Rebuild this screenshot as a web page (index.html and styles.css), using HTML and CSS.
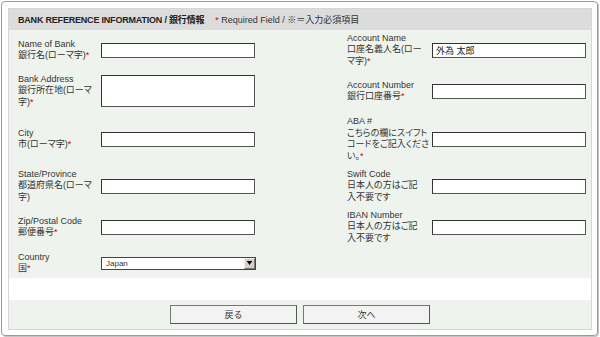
FILE: index.html
```html
<!DOCTYPE html>
<html lang="ja">
<head>
    <meta charset="UTF-8">
    <meta name="viewport" content="width=device-width, initial-scale=1.0">
    <title>Bank Reference Information</title>
    <link rel="stylesheet" href="styles.css">
</head>
<body>
    <div class="frame">
        <div class="panel">
            <div class="panel-head">
                <span class="head-title">BANK REFERENCE INFORMATION / 銀行情報</span>
                <span class="head-note"><span class="req">*</span> Required Field / ※＝入力必須項目</span>
            </div>

            <div class="form-grid">
                <!-- row 1 -->
                <label class="field-label">Name of Bank<br>銀行名(ローマ字)<span class="req">*</span></label>
                <div class="field"><input class="text-input" type="text"></div>
                <label class="field-label">Account Name<br>口座名義人名(ロー<br>マ字)<span class="req">*</span></label>
                <div class="field"><input class="text-input" type="text" value="外為 太郎"></div>

                <!-- row 2 -->
                <label class="field-label">Bank Address<br>銀行所在地(ローマ<br>字)<span class="req">*</span></label>
                <div class="field"><textarea class="text-area"></textarea></div>
                <label class="field-label">Account Number<br>銀行口座番号<span class="req">*</span></label>
                <div class="field"><input class="text-input" type="text"></div>

                <!-- row 3 -->
                <label class="field-label">City<br>市(ローマ字)<span class="req">*</span></label>
                <div class="field"><input class="text-input" type="text"></div>
                <label class="field-label">ABA #<br>こちらの欄にスイフト<br>コードをご記入くださ<br>い。<span class="req">*</span></label>
                <div class="field"><input class="text-input" type="text"></div>

                <!-- row 4 -->
                <label class="field-label">State/Province<br>都道府県名(ローマ<br>字)</label>
                <div class="field"><input class="text-input" type="text"></div>
                <label class="field-label">Swift Code<br>日本人の方はご記<br>入不要です</label>
                <div class="field"><input class="text-input" type="text"></div>

                <!-- row 5 -->
                <label class="field-label">Zip/Postal Code<br>郵便番号<span class="req">*</span></label>
                <div class="field"><input class="text-input" type="text"></div>
                <label class="field-label">IBAN Number<br>日本人の方はご記<br>入不要です</label>
                <div class="field"><input class="text-input" type="text"></div>

                <!-- row 6 -->
                <label class="field-label">Country<br>国<span class="req">*</span></label>
                <div class="field">
                    <div class="select-box">
                        <span class="select-value">Japan</span>
                        <span class="select-btn">
                            <svg width="5" height="4" viewBox="0 0 5 4"><path d="M0 0h5v1H0zM0.5 1h4L2.5 4z" fill="#000"/></svg>
                        </span>
                    </div>
                </div>
            </div>

            <div class="panel-gap"></div>

            <div class="panel-actions">
                <button class="btn">戻る</button>
                <button class="btn">次へ</button>
            </div>
        </div>
    </div>
</body>
</html>
```

FILE: styles.css
```css
* {
    margin: 0;
    padding: 0;
    box-sizing: border-box;
}

body {
    font-family: "Liberation Sans", "Noto Sans CJK JP", sans-serif;
    font-size: 9px;
    color: #333;
    background: #fff;
    font-feature-settings: "palt";
}

.frame {
    margin: 1px;
    width: 597px;
    height: 335px;
    border: 1px solid #9a9a9a;
    border-radius: 4px;
    box-shadow: 1px 1px 0 #c4c4c4;
    padding: 6px 5px 5px 6px;
}

.panel {
    border: 1px solid #d6d6d6;
    height: 100%;
    display: flex;
    flex-direction: column;
}

.panel-head {
    height: 21px;
    background: #dcdcdc;
    display: flex;
    align-items: center;
    padding-left: 9px;
}

.head-title {
    font-weight: bold;
    color: #222;
    letter-spacing: -0.2px;
}

.head-note {
    margin-left: 11px;
}

.req {
    color: #cc0000;
}

.form-grid {
    height: 248px;
    background: #eff3ee;
    padding-left: 9px;
    display: grid;
    grid-template-columns: 83px 246px 85px 154px;
    grid-template-rows: 40px 42px 54px 40px 42px 30px;
    align-items: center;
}

.field-label {
    line-height: 11.5px;
    white-space: nowrap;
}

.field {
    display: flex;
    align-items: center;
}

.text-input,
.text-area {
    width: 154px;
    height: 15px;
    border: 1px solid #555;
    border-top-color: #333;
    border-left-color: #333;
    background: #fff;
    font-family: inherit;
    font-size: 9px;
    color: #222;
    padding: 0 3px;
    outline: none;
}

.text-area {
    height: 32px;
    resize: none;
}

.select-box {
    width: 155px;
    height: 13px;
    border: 1px solid #444;
    background: #fff;
    display: flex;
    align-items: center;
    justify-content: space-between;
    font-size: 8px;
}

.select-value {
    padding-left: 4px;
}

.select-btn {
    width: 11px;
    height: 11px;
    background: #d4d0c8;
    border: 1px solid #f4f4f4;
    border-right-color: #777;
    border-bottom-color: #777;
    display: flex;
    align-items: center;
    justify-content: center;
}

.panel-gap {
    height: 22px;
    background: #fff;
}

.panel-actions {
    flex: 1;
    background: #eff3ee;
    display: flex;
    justify-content: center;
    align-items: flex-start;
    gap: 6px;
    padding-top: 5px;
}

.btn {
    width: 127px;
    height: 19px;
    border: 1px solid #555;
    border-top-color: #777;
    border-left-color: #777;
    background: #f3f3f3;
    font-family: inherit;
    font-size: 9px;
    color: #333;
    cursor: pointer;
}
```
